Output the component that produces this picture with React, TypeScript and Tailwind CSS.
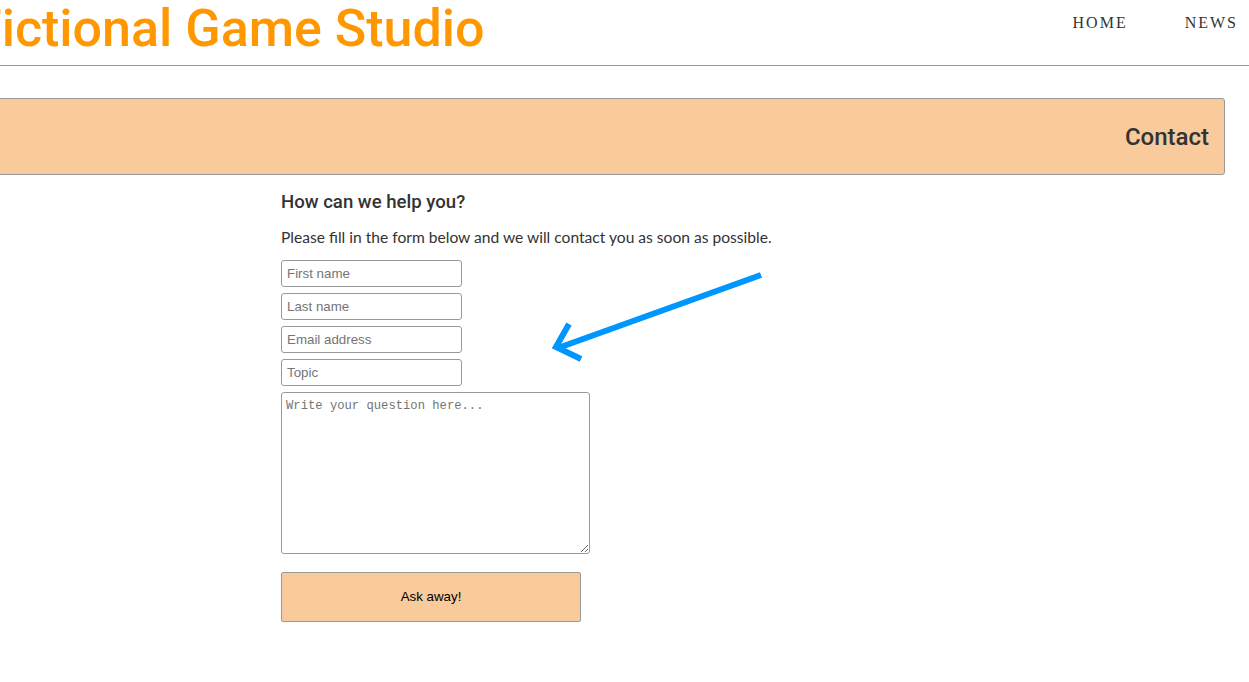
export default function App() {
  return (
    <div className="relative min-h-screen bg-white overflow-hidden font-['Roboto',sans-serif]">
      {/* Header */}
      <header className="h-[66px] border-b border-[#999] flex items-start justify-between">
        <h1 className="ml-[-27px] mt-[-2px] text-[52px] leading-[62px] font-medium text-[#ff9800] whitespace-nowrap">
          Fictional Game Studio
        </h1>
        <nav className="flex items-center gap-[57px] mr-[11px] mt-[11px] font-['Liberation_Serif',serif] text-[16px] tracking-[2px] text-[#333]">
          <a href="#">HOME</a>
          <a href="#">NEWS</a>
        </nav>
      </header>

      {/* Banner */}
      <div className="mt-[32px] mr-[24px] ml-[-4px] h-[77px] bg-[#f8ca9c] border border-[#999] rounded-[3px] flex items-center justify-end pr-[15px]">
        <h2 className="text-[24px] font-medium text-[#333]">Contact</h2>
      </div>

      {/* Form */}
      <div className="ml-[281px] mt-[15px]">
        <h3 className="text-[18.6px] leading-[24px] font-medium text-[#333]">How can we help you?</h3>
        <p className="mt-[13px] font-['Lato',sans-serif] text-[15.6px] leading-[20px] text-[#333]">
          Please fill in the form below and we will contact you as soon as possible.
        </p>
        <form className="mt-[13px] flex flex-col gap-[6px] font-['Liberation_Sans',Arial,sans-serif]">
          {['First name', 'Last name', 'Email address', 'Topic'].map((p) => (
            <input
              key={p}
              placeholder={p}
              className="w-[181px] h-[27px] px-[5px] border border-[#999] rounded-[3px] text-[13.33px] text-black placeholder:text-[#757575] outline-none"
            />
          ))}
          <textarea
            placeholder="Write your question here..."
            className="w-[309px] h-[162px] px-[4px] py-[5px] border border-[#999] rounded-[3px] font-['Liberation_Mono',monospace] text-[12.2px] leading-[16px] placeholder:text-[#757575] outline-none"
          />
          <button
            type="button"
            className="mt-[12px] w-[300px] h-[50px] bg-[#f8ca9c] border border-[#999] rounded-[2px] text-[13.33px] text-black"
          >
            Ask away!
          </button>
        </form>
      </div>

      {/* Arrow annotation */}
      <svg className="absolute left-[540px] top-[260px]" width="240" height="110" viewBox="0 0 240 110">
        <g stroke="#0096ff" strokeWidth="6" fill="none">
          <path d="M221 15 L18 88" />
          <path d="M29 64 L16 87 L41 99" />
        </g>
      </svg>
    </div>
  );
}
